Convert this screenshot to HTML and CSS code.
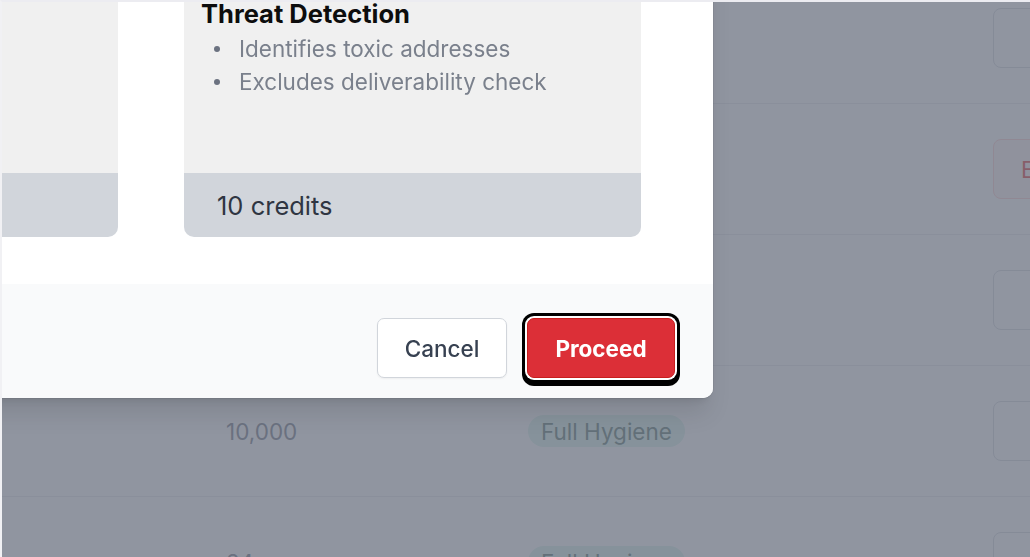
FILE: index.html
```html
<!DOCTYPE html>
<html lang="en">
<head>
<meta charset="utf-8">
<title>Verification</title>
<link rel="stylesheet" href="styles.css">
</head>
<body>
<div class="page">
  <div class="table">
    <div class="row">
      <div class="cell-name"></div>
      <div class="cell-num">25,000</div>
      <div class="cell-type"><span class="badge">Full Hygiene</span></div>
      <div class="cell-act"><span class="act-btn">View</span></div>
    </div>
    <div class="row">
      <div class="cell-name"></div>
      <div class="cell-num">5,000</div>
      <div class="cell-type"><span class="badge">Full Hygiene</span></div>
      <div class="cell-act"><span class="act-btn act-danger">Error</span></div>
    </div>
    <div class="row">
      <div class="cell-name"></div>
      <div class="cell-num">1,200</div>
      <div class="cell-type"><span class="badge">Full Hygiene</span></div>
      <div class="cell-act"><span class="act-btn">View</span></div>
    </div>
    <div class="row">
      <div class="cell-name"></div>
      <div class="cell-num">10,000</div>
      <div class="cell-type"><span class="badge">Full Hygiene</span></div>
      <div class="cell-act"><span class="act-btn">View</span></div>
    </div>
    <div class="row">
      <div class="cell-name"></div>
      <div class="cell-num">24</div>
      <div class="cell-type"><span class="badge">Full Hygiene</span></div>
      <div class="cell-act"><span class="act-btn">View</span></div>
    </div>
  </div>
</div>

<div class="overlay"></div>

<div class="modal">
  <div class="modal-body">
    <div class="card">
      <div class="card-body">
        <h3 class="card-title">Full Hygiene</h3>
        <ul class="card-list">
          <li>Removes toxic addresses</li>
          <li>Checks deliverability</li>
        </ul>
      </div>
      <div class="card-foot">15 credits</div>
    </div>
    <div class="card">
      <div class="card-body">
        <h3 class="card-title">Threat Detection</h3>
        <ul class="card-list">
          <li>Identifies toxic addresses</li>
          <li>Excludes deliverability check</li>
        </ul>
      </div>
      <div class="card-foot">10 credits</div>
    </div>
  </div>
  <div class="modal-foot">
    <button class="btn btn-cancel" type="button">Cancel</button>
    <button class="btn btn-proceed" type="button">Proceed</button>
  </div>
</div>

<div class="frame"></div>
</body>
</html>
```

FILE: styles.css
```css
* { box-sizing: border-box; }

html, body {
  margin: 0;
  padding: 0;
  width: 1030px;
  height: 557px;
  overflow: hidden;
  background: #ffffff;
  font-family: Inter, "Noto Sans", "Liberation Sans", sans-serif;
}

.page {
  width: 1030px;
  height: 557px;
  overflow: hidden;
}

.table {
  margin-top: -27px;
  display: flex;
  flex-direction: column;
}

.row {
  height: 131px;
  border-bottom: 1px solid #e5e7eb;
  display: grid;
  grid-template-columns: 226px 302px 465px 200px;
  align-items: center;
}

.cell-num {
  font-size: 22.5px;
  color: #6b7280;
}

.badge {
  display: inline-flex;
  align-items: center;
  height: 32px;
  padding: 0 13px;
  border-radius: 16px;
  background: #d5f3e9;
  color: #4b6b63;
  font-size: 22.5px;
}

.act-btn {
  display: inline-flex;
  align-items: center;
  height: 60px;
  padding: 0 40px;
  border: 1px solid #d1d5db;
  border-radius: 8px;
  background: #ffffff;
  color: #374151;
  font-size: 22.5px;
}

.act-danger {
  padding: 0 27px;
  background: #fef2f2;
  border-color: #fecaca;
  color: #dc2626;
}

.overlay {
  position: fixed;
  inset: 0;
  background: rgba(107, 114, 128, 0.75);
  z-index: 10;
}

.modal {
  position: absolute;
  left: -411px;
  top: -60px;
  width: 1124px;
  background: #ffffff;
  border-radius: 10px;
  overflow: hidden;
  z-index: 20;
  box-shadow: 0 20px 25px -5px rgba(0, 0, 0, 0.1), 0 8px 10px -6px rgba(0, 0, 0, 0.1), 0 0 0 1px rgba(0, 0, 0, 0.05);
}

.modal-body {
  padding: 20px 72px 47px;
  display: grid;
  grid-template-columns: 1fr 1fr;
  gap: 66px;
}

.card {
  border-radius: 10px;
  overflow: hidden;
  display: flex;
  flex-direction: column;
}

.card-body {
  height: 213px;
  background: #f0f0f0;
  padding: 39px 17px 0;
}

.card-title {
  margin: 0;
  font-size: 25.5px;
  line-height: 30px;
  font-weight: 700;
  color: #0d0d0d;
}

.card-list {
  list-style: none;
  margin: 3px 0 0;
  padding: 0 0 0 38px;
}

.card-list li {
  position: relative;
  font-size: 22.5px;
  line-height: 33px;
  color: #7a808c;
}

.card-list li::before {
  content: "";
  position: absolute;
  left: -25px;
  top: 14px;
  width: 6px;
  height: 6px;
  border-radius: 50%;
  background: #6b7280;
}

.card-foot {
  height: 64px;
  background: #d1d5db;
  display: flex;
  align-items: center;
  padding-left: 33px;
  font-size: 25.5px;
  color: #2f3542;
}

.modal-foot {
  background: #f9fafb;
  padding: 34px 38px 20px;
  display: flex;
  justify-content: flex-end;
  gap: 20px;
}

.btn {
  height: 60px;
  border-radius: 7px;
  font-family: Inter, "Noto Sans", "Liberation Sans", sans-serif;
  font-size: 22.5px;
  cursor: pointer;
}

.btn-cancel {
  width: 130px;
  padding: 0;
  background: #ffffff;
  border: 1px solid #d1d5db;
  color: #374151;
  font-weight: 500;
  box-shadow: 0 1px 2px rgba(0, 0, 0, 0.05);
}

.btn-proceed {
  width: 148px;
  padding: 0;
  background: #dc2f37;
  border: 1px solid #c81e1e;
  color: #ffffff;
  font-weight: 700;
  box-shadow: 0 0 0 2px #ffffff, 0 0 0 5px #000000, 0 3px 0 5px #000000;
}

.frame {
  position: fixed;
  inset: 0;
  border-top: 2px solid #ececf1;
  border-left: 2px solid #f1f1f4;
  pointer-events: none;
  z-index: 50;
}
```
